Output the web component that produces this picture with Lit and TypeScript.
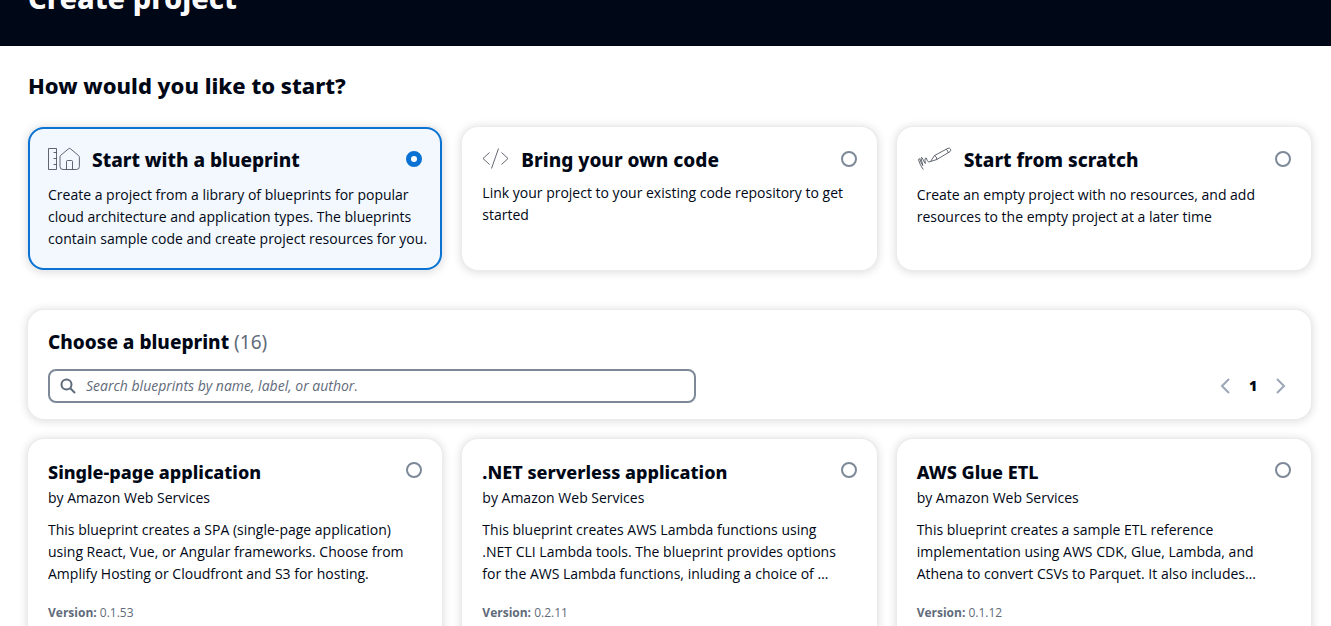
import { LitElement, html, css } from "lit";
import { customElement, property, state } from "lit/decorators.js";
import { classMap } from "lit/directives/class-map.js";

interface Choice {
  id: string;
  title: string;
  text: string;
}

interface Blueprint {
  id: string;
  title: string;
  text: string;
  version: string;
}

const choices: Choice[] = [
  {
    id: "blueprint",
    title: "Start with a blueprint",
    text: "Create a project from a library of blueprints for popular cloud architecture and application types. The blueprints contain sample code and create project resources for you.",
  },
  {
    id: "code",
    title: "Bring your own code",
    text: "Link your project to your existing code repository to get started",
  },
  {
    id: "scratch",
    title: "Start from scratch",
    text: "Create an empty project with no resources, and add resources to the empty project at a later time",
  },
];

const blueprints: Blueprint[] = [
  {
    id: "spa",
    title: "Single-page application",
    text: "This blueprint creates a SPA (single-page application) using React, Vue, or Angular frameworks. Choose from Amplify Hosting or Cloudfront and S3 for hosting.",
    version: "0.1.53",
  },
  {
    id: "dotnet",
    title: ".NET serverless application",
    text: "This blueprint creates AWS Lambda functions using .NET CLI Lambda tools. The blueprint provides options for the AWS Lambda functions, inluding a choice of …",
    version: "0.2.11",
  },
  {
    id: "glue",
    title: "AWS Glue ETL",
    text: "This blueprint creates a sample ETL reference implementation using AWS CDK, Glue, Lambda, and Athena to convert CSVs to Parquet. It also includes…",
    version: "0.1.12",
  },
];

@customElement("choice-icon")
class ChoiceIcon extends LitElement {
  @property() name = "blueprint";

  static styles = css`
    :host {
      display: block;
      flex: none;
    }
    svg {
      display: block;
      fill: none;
      stroke: #3b404c;
      stroke-width: 0.8;
      stroke-linejoin: round;
    }
  `;

  render() {
    if (this.name === "code") {
      return html`<svg width="27" height="26" viewBox="0 0 27 26" aria-hidden="true">
        <path d="M7.500 5.500 1 11.500l6.500 6M19.500 5.500 26 11.500l-6.500 6" />
        <path d="M16.500 1.500 9.500 21.500" />
      </svg>`;
    }
    if (this.name === "scratch") {
      return html`<svg width="35" height="28" viewBox="0 0 35 28" aria-hidden="true">
        <path d="M13.500 14.500 17.500 8.500 31 1.300Q32.700 0.600 33.500 2.200Q34.200 3.800 32.900 4.700L19.800 12.500Z" />
        <path d="M17.500 8.500Q20 9.800 19.800 12.500M29.200 2.300Q31 3.700 31.200 5.700" />
        <path d="M13.500 14.500Q11.300 16.200 10.300 13.500Q9.300 9.800 8.300 11.200Q7.600 12.500 8.300 16.500Q6.500 14 5.200 10.800Q4.300 9.600 4.100 11.500L5.800 18.500" />
        <path d="M5.800 18.500Q3.600 15 2.900 12Q2 10.800 1.500 12.800Q3 18 6.300 22.500" />
      </svg>`;
    }
    return html`<svg width="32" height="28" viewBox="0 0 32 28" aria-hidden="true">
      <path d="M0.500 1.500H8.500V22.500H0.500ZM5.500 5.500H8.500M5.500 11.500H8.500M5.500 17.500H8.500" />
      <path d="M12.500 8.500 20.500 1.800Q21.500 1 22.500 1.800L30.500 8.500Q31.400 9.300 31.400 10.500V19.500Q31.400 22.500 28.500 22.500H15Q12 22.500 12 19.500V10Q12 9 12.500 8.500Z" />
      <path d="M18.500 22.500V14.500Q18.500 13.500 19.500 13.500H23.500Q24.500 13.500 24.500 14.500V22.500" />
    </svg>`;
  }
}

@customElement("app-root")
class AppRoot extends LitElement {
  @state() private choice = "blueprint";
  @state() private selected = "";

  static styles = css`
    :host {
      display: block;
      height: 100vh;
      overflow: hidden;
      background: #ffffff;
      color: #000716;
      font: 400 14px/22px "Open Sans", "Noto Sans", sans-serif;
    }
    * {
      box-sizing: border-box;
    }
    h1,
    h2,
    h3,
    p {
      margin: 0;
      font-family: "Noto Sans", "Open Sans", sans-serif;
    }
    p {
      font-family: inherit;
    }
    .banner {
      display: flex;
      align-items: flex-end;
      height: 46px;
      padding: 0 28px 30px;
      background: #000716;
      color: #fbfbfb;
    }
    .banner h1 {
      font-size: 29px;
      line-height: 36px;
      font-weight: 800;
    }
    main {
      padding: 23px 20px 20px 28px;
    }
    .question {
      font-size: 22px;
      line-height: 32px;
      font-weight: 800;
    }
    .grid {
      display: grid;
      grid-template-columns: repeat(3, minmax(0, 1fr));
      gap: 20px;
    }
    .choices {
      margin: 26px 0 40px;
    }
    .card,
    .panel {
      display: block;
      border-radius: 16px;
      background: #ffffff;
      box-shadow: 0 0 1px 1px #e9ebed, 0 1px 8px 2px rgba(0, 7, 22, 0.12);
    }
    .card {
      padding: 20px;
      cursor: pointer;
    }
    .card.on {
      padding: 18px;
      border: 2px solid #0972d3;
      background: #f2f8fd;
    }
    .choices p {
      margin-right: -12px;
    }
    .top {
      display: flex;
      align-items: flex-start;
      gap: 12px;
    }
    .choices .top {
      margin-bottom: 9px;
    }
    .top h3 {
      flex: 1;
      line-height: 26px;
      font-weight: 800;
      font-size: 18px;
    }
    .choices h3 {
      font-size: 19px;
    }
    input[type="radio"] {
      appearance: none;
      flex: none;
      width: 16px;
      height: 16px;
      margin: 3px 0 0;
      border: 2px solid #7d8998;
      border-radius: 50%;
      background: #ffffff;
    }
    input[type="radio"]:checked {
      border: 5px solid #0972d3;
    }
    .choices input[type="radio"] {
      margin-top: 4px;
    }
    .panel {
      padding: 20px 20px 16px;
      margin-bottom: 20px;
    }
    .panel h2 {
      margin-bottom: 15px;
      font-size: 19px;
      line-height: 24px;
      font-weight: 800;
    }
    .count {
      color: #5f6b7a;
      font-weight: 400;
    }
    .tools {
      display: flex;
      align-items: center;
      justify-content: space-between;
    }
    .search {
      display: flex;
      align-items: center;
      flex: 0 1 648px;
      height: 34px;
      padding: 0 10px;
      gap: 10px;
      border: 2px solid #7d8998;
      border-radius: 8px;
    }
    .search svg {
      flex: none;
      fill: none;
      stroke: #5f6b7a;
      stroke-width: 2;
    }
    .search input {
      flex: 1;
      min-width: 0;
      padding: 0;
      border: 0;
      outline: 0;
      background: none;
      color: inherit;
      font: inherit;
    }
    .search input::placeholder {
      color: #5f6b7a;
      opacity: 1;
      font-style: italic;
    }
    .pages {
      display: flex;
      align-items: center;
      gap: 8px;
    }
    .pages button {
      display: grid;
      place-items: center;
      width: 20px;
      height: 24px;
      padding: 0;
      border: 0;
      background: none;
      color: #000716;
      font: inherit;
      font-weight: 800;
    }
    .pages svg {
      fill: none;
      stroke: #9ba7b6;
      stroke-width: 2;
    }
    .author {
      margin: 2px 0 10px;
    }
    .summary {
      padding-right: 12px;
    }
    .version {
      margin-top: 19px;
      color: #5f6b7a;
      font-size: 12px;
      line-height: 18px;
    }
  `;

  private radio(group: string, id: string, current: string, pick: () => void) {
    return html`<input
      type="radio"
      id=${`${group}-${id}`}
      name=${group}
      .value=${id}
      .checked=${current === id}
      @change=${pick}
    />`;
  }

  render() {
    return html`
      <header class="banner"><h1>Create project</h1></header>
      <main>
        <h2 class="question">How would you like to start?</h2>
        <div class="grid choices" role="radiogroup" aria-label="How would you like to start?">
          ${choices.map(
            (c) => html`<label
              class=${classMap({ card: true, on: this.choice === c.id })}
              for=${`start-${c.id}`}
            >
              <div class="top">
                <choice-icon name=${c.id}></choice-icon>
                <h3>${c.title}</h3>
                ${this.radio("start", c.id, this.choice, () => (this.choice = c.id))}
              </div>
              <p>${c.text}</p>
            </label>`
          )}
        </div>
        <section class="panel">
          <h2>Choose a blueprint <span class="count">(16)</span></h2>
          <div class="tools">
            <label class="search">
              <svg width="16" height="16" viewBox="0 0 16 16" aria-hidden="true">
                <circle cx="6.500" cy="6.500" r="5" />
                <path d="m10 10 5 5" />
              </svg>
              <input
                type="text"
                aria-label="Search blueprints"
                placeholder="Search blueprints by name, label, or author."
              />
            </label>
            <nav class="pages" aria-label="Pages">
              <button type="button" aria-label="Previous page" disabled>
                <svg width="16" height="16" viewBox="0 0 16 16"><path d="M12 1 5 8l7 7" /></svg>
              </button>
              <button type="button" aria-current="page">1</button>
              <button type="button" aria-label="Next page" disabled>
                <svg width="16" height="16" viewBox="0 0 16 16"><path d="m4 1 7 7-7 7" /></svg>
              </button>
            </nav>
          </div>
        </section>
        <div class="grid" role="radiogroup" aria-label="Blueprints">
          ${blueprints.map(
            (b) => html`<label
              class=${classMap({ card: true, on: this.selected === b.id })}
              for=${`item-${b.id}`}
            >
              <div class="top">
                <h3>${b.title}</h3>
                ${this.radio("item", b.id, this.selected, () => (this.selected = b.id))}
              </div>
              <p class="author">by Amazon Web Services</p>
              <p class="summary">${b.text}</p>
              <p class="version"><b>Version:</b> ${b.version}</p>
            </label>`
          )}
        </div>
      </main>
    `;
  }
}
